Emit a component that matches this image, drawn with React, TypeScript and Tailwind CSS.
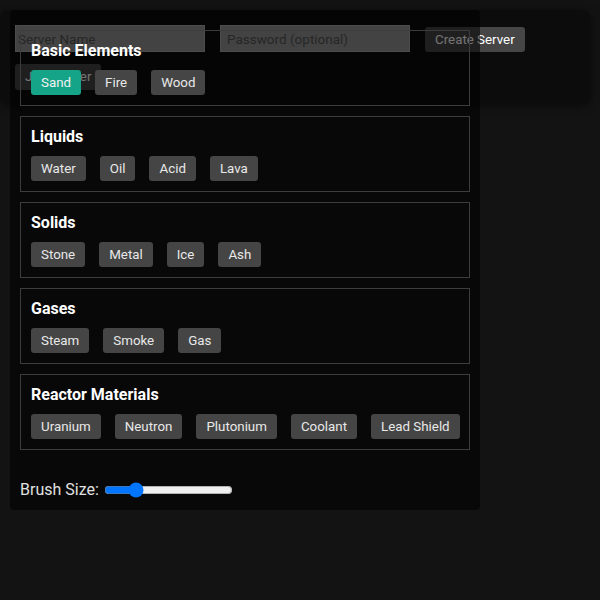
const groups: { title: string; items: string[] }[] = [
  { title: "Basic Elements", items: ["Sand", "Fire", "Wood"] },
  { title: "Liquids", items: ["Water", "Oil", "Acid", "Lava"] },
  { title: "Solids", items: ["Stone", "Metal", "Ice", "Ash"] },
  { title: "Gases", items: ["Steam", "Smoke", "Gas"] },
  { title: "Reactor Materials", items: ["Uranium", "Neutron", "Plutonium", "Coolant", "Lead Shield"] },
]

function ServerBar() {
  return (
    <div className="absolute left-0 top-[10px] w-[590px] h-[93px] rounded-lg bg-[#0c0c0c] shadow-[0_2px_10px_rgba(0,0,0,0.6)] px-[15px] pt-[15px]">
      <div className="flex items-end gap-[15px]">
        <input
          placeholder="Server Name"
          className="w-[190px] h-[27px] px-[2px] border border-[#a8a8a8] bg-[#959595] text-[13.5px] text-[#222] placeholder:text-[#555]"
        />
        <input
          placeholder="Password (optional)"
          className="w-[190px] h-[27px] px-[6px] border border-[#a8a8a8] bg-[#959595] text-[13.5px] text-[#222] placeholder:text-[#555]"
        />
        <button className="h-[25px] px-[10px] rounded-[3px] bg-[#464646] text-[13.33px] text-white whitespace-nowrap">
          Create Server
        </button>
      </div>
      <div className="mt-[12px] flex">
        <button className="h-[26px] px-[10px] rounded-[3px] bg-[#464646] text-[13.33px] text-white whitespace-nowrap">
          Join Server
        </button>
      </div>
    </div>
  )
}

export default function App() {
  return (
    <div className="relative min-h-[600px] w-full bg-[#131313] font-['Roboto',sans-serif] text-[#e6e6e6] overflow-hidden">
      <ServerBar />
      <div className="relative ml-[10px] top-[10px] w-[470px] h-[500px] rounded-[4px] bg-[rgba(0,0,0,0.55)] p-[10px]">
        {groups.map((g) => (
          <div key={g.title} className="my-[10px] border border-[#3c3c3c] p-[10px]">
            <h3 className="text-[16px] leading-[19px] font-bold text-white mb-[10px]">{g.title}</h3>
            <div className="flex gap-[14px]">
              {g.items.map((it) => (
                <button
                  key={it}
                  className={
                    it === "Sand"
                      ? "h-[25px] px-[10px] rounded-[3px] bg-[#16a489] text-[13.33px] text-[#f0f0f0] whitespace-nowrap"
                      : "h-[25px] px-[10px] rounded-[3px] bg-[#454545] text-[13.33px] text-[#e8e8e8] whitespace-nowrap"
                  }
                >
                  {it}
                </button>
              ))}
            </div>
          </div>
        ))}
        <div className="mt-[28px] flex items-center text-[16px] leading-[24px] text-[#e0e0e0]">
          <span>Brush Size:</span>
          <input type="range" min={1} max={20} defaultValue={5} className="ml-[5px] w-[129px]" />
        </div>
      </div>
    </div>
  )
}
